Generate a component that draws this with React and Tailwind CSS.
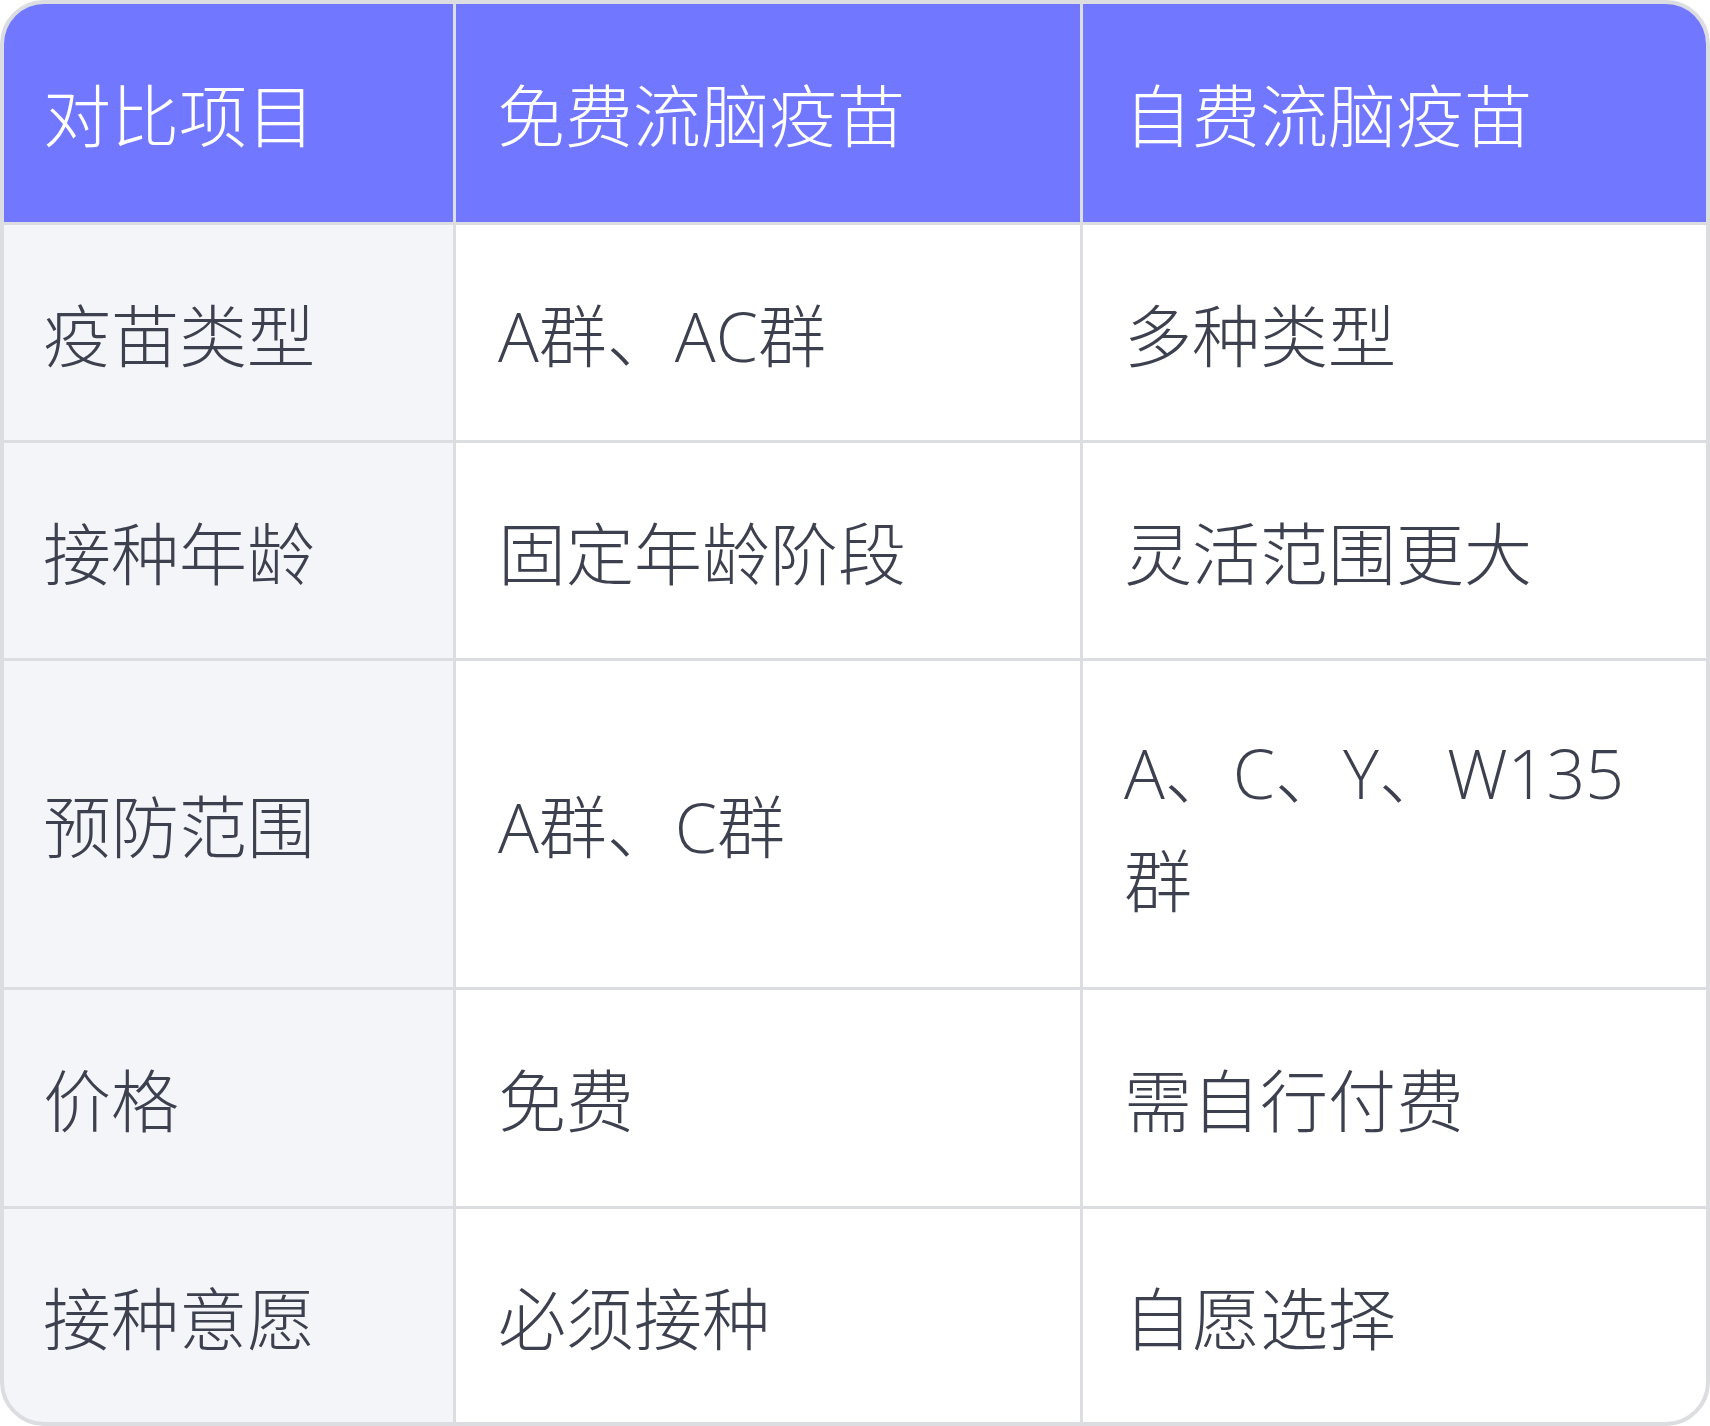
import React from "react";

const rows = [
  ["疫苗类型", "A群、AC群", "多种类型", "h-[215px]"],
  ["接种年龄", "固定年龄阶段", "灵活范围更大", "h-[215px]"],
  ["预防范围", "A群、C群", "A、C、Y、W135群", "h-[326px]"],
  ["价格", "免费", "需自行付费", "h-[216px]"],
  ["接种意愿", "必须接种", "自愿选择", "h-[213px]"],
];

export default function App() {
  return (
    <div className="w-[1710px] h-[1426px] bg-white">
      <div
        className="w-[1710px] border-4 border-[#dcdde1] rounded-[44px] overflow-hidden bg-[#dcdde1] grid grid-cols-[449px_624px_623px] gap-[3px] text-[68px] leading-[108px] font-light"
        style={{ fontFamily: '"Open Sans", "Noto Sans CJK SC", sans-serif' }}
      >
        <div className="h-[218px] bg-[#7177ff] text-white flex items-center pl-[39px] pt-[6px]">对比项目</div>
        <div className="h-[218px] bg-[#7177ff] text-white flex items-center pl-[41px] pt-[6px]">免费流脑疫苗</div>
        <div className="h-[218px] bg-[#7177ff] text-white flex items-center pl-[41px] pt-[6px]">自费流脑疫苗</div>
        {rows.map(([a, b, c, h], i) => (
          <React.Fragment key={i}>
            <div className={`${h} bg-[#f4f5f9] text-[#3d404e] flex items-center pl-[39px] pt-[6px]`}>{a}</div>
            <div className={`${h} bg-white text-[#3d404e] flex items-center pl-[42px] pt-[6px]`}>{b}</div>
            <div className={`${h} bg-white text-[#3d404e] flex items-center pl-[41px] pr-[40px] pt-[6px]`}>
              <span className="block">{c}</span>
            </div>
          </React.Fragment>
        ))}
      </div>
    </div>
  );
}
